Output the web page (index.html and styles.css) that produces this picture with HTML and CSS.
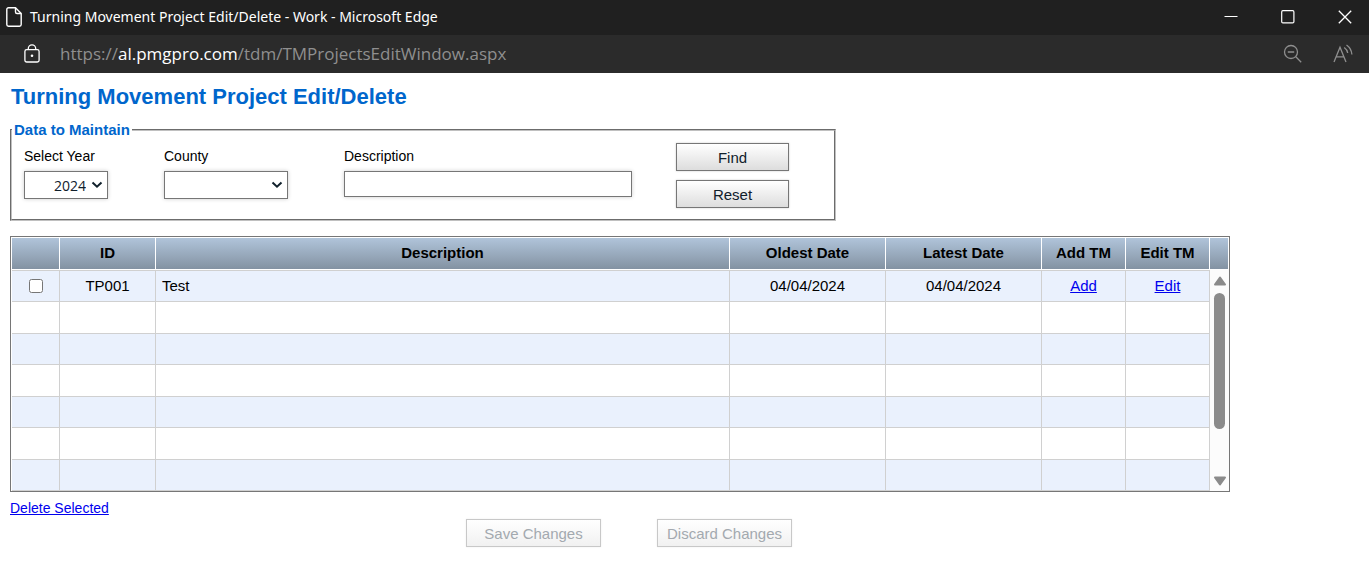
FILE: index.html
```html
<!DOCTYPE html>
<html lang="en">
  <head>
    <meta charset="UTF-8" />
    <meta name="viewport" content="width=device-width, initial-scale=1.0" />
    <title>Turning Movement Project Edit/Delete</title>
    <link rel="stylesheet" href="styles.css">
  </head>
  <body>
    <header class="window">
      <div class="title-bar">
        <svg class="page-icon" width="16" height="20" viewBox="0 0 16 20" fill="none" stroke="#fff" stroke-width="1.4" stroke-linejoin="round">
          <path d="M2.5 .8h7L15.2 6.5v11a1.7 1.7 0 0 1-1.7 1.7h-11A1.7 1.7 0 0 1 .8 17.5v-15A1.7 1.7 0 0 1 2.5 .8z" />
          <path d="M9.5 .8v4.2a1.5 1.5 0 0 0 1.5 1.5h4.2" />
        </svg>
        <span class="window-title">Turning Movement Project Edit/Delete - Work - Microsoft Edge</span>
        <div class="window-buttons">
          <button type="button" aria-label="Minimize">
            <svg width="14" height="14" viewBox="0 0 14 14" stroke="#fff"><path d="M.5 6.5h13" /></svg>
          </button>
          <button type="button" aria-label="Maximize">
            <svg width="14" height="14" viewBox="0 0 14 14" fill="none" stroke="#fff" stroke-width="1.2"><rect x=".7" y=".7" width="12.2" height="12.2" rx="1.2" /></svg>
          </button>
          <button type="button" aria-label="Close">
            <svg width="14" height="14" viewBox="0 0 14 14" stroke="#fff" stroke-width="1.3"><path d="M.8 .8l12.4 12.4M13.2 .8L.8 13.2" /></svg>
          </button>
        </div>
      </div>
      <div class="address-bar">
        <svg class="lock-icon" width="16" height="20" viewBox="0 0 16 20" fill="none" stroke="#fff" stroke-width="1.3">
          <rect x=".9" y="5.7" width="14.2" height="12.3" rx="1.8" />
          <path d="M4.3 5.7V4.5a3.7 3.7 0 0 1 7.4 0v1.2" />
          <circle cx="8" cy="11.8" r="1.3" fill="#fff" stroke="none" />
        </svg>
        <span class="url">https://<b>al.pmgpro.com</b>/tdm/TMProjectsEditWindow.aspx</span>
        <div class="address-tools">
          <button type="button" aria-label="Zoom out">
            <svg width="20" height="20" viewBox="0 0 20 20" fill="none" stroke="#8f8f8f" stroke-width="1.3">
              <circle cx="8" cy="8" r="6.5" />
              <path d="M4.8 8h6.4M12.8 12.8l5.4 5.4" />
            </svg>
          </button>
          <button type="button" aria-label="Read aloud">
            <svg width="20" height="20" viewBox="0 0 20 20" fill="none" stroke="#8f8f8f" stroke-width="1.3">
              <path d="M1 18L7 3.2 13 18M3.2 12.8h7.6" />
              <path d="M11.2 3.5q3 2 3.5 5.500M13.5 1q5 3.5 5.4 9.5" />
            </svg>
          </button>
        </div>
      </div>
    </header>

    <main class="page">
      <h1>Turning Movement Project Edit/Delete</h1>

      <form>
        <fieldset class="filters">
          <legend>Data to Maintain</legend>
          <div class="filter-row">
            <div class="field field-year">
              <label for="year">Select Year</label>
              <div class="select-box">
                <select id="year" class="year-select">
                  <option>2024</option>
                </select>
                <svg class="chevron" width="12" height="8" viewBox="0 0 12 8"><path d="M1.5 1.5L6 5.7l4.5-4.2" /></svg>
              </div>
            </div>
            <div class="field field-county">
              <label for="county">County</label>
              <div class="select-box">
                <select id="county">
                  <option></option>
                </select>
                <svg class="chevron" width="12" height="8" viewBox="0 0 12 8"><path d="M1.5 1.5L6 5.7l4.5-4.2" /></svg>
              </div>
            </div>
            <div class="field field-description">
              <label for="description">Description</label>
              <input type="text" id="description" />
            </div>
            <div class="filter-buttons">
              <button type="button" class="btn">Find</button>
              <button type="button" class="btn">Reset</button>
            </div>
          </div>
        </fieldset>
      </form>

      <div class="grid">
        <table>
          <colgroup>
            <col class="col-check" />
            <col class="col-id" />
            <col />
            <col class="col-date" />
            <col class="col-date" />
            <col class="col-link" />
            <col class="col-link" />
          </colgroup>
          <thead>
            <tr>
              <th></th>
              <th>ID</th>
              <th>Description</th>
              <th>Oldest Date</th>
              <th>Latest Date</th>
              <th>Add TM</th>
              <th>Edit TM</th>
            </tr>
          </thead>
          <tbody>
            <tr>
              <td><input type="checkbox" aria-label="Select TP001" /></td>
              <td>TP001</td>
              <td class="text">Test</td>
              <td>04/04/2024</td>
              <td>04/04/2024</td>
              <td><a href="#">Add</a></td>
              <td><a href="#">Edit</a></td>
            </tr>
            <tr><td></td><td></td><td></td><td></td><td></td><td></td><td></td></tr>
            <tr><td></td><td></td><td></td><td></td><td></td><td></td><td></td></tr>
            <tr><td></td><td></td><td></td><td></td><td></td><td></td><td></td></tr>
            <tr><td></td><td></td><td></td><td></td><td></td><td></td><td></td></tr>
            <tr><td></td><td></td><td></td><td></td><td></td><td></td><td></td></tr>
            <tr><td></td><td></td><td></td><td></td><td></td><td></td><td></td></tr>
          </tbody>
        </table>
        <div class="grid-side">
          <div class="side-head"></div>
          <div class="scrollbar">
            <svg width="14" height="10" viewBox="0 0 14 10"><path d="M7 1.5L12 8.5H2z" /></svg>
            <div class="thumb"></div>
            <svg width="14" height="10" viewBox="0 0 14 10"><path d="M7 8.5L12 1.5H2z" /></svg>
          </div>
        </div>
      </div>

      <a href="#" class="delete-link">Delete Selected</a>

      <div class="actions">
        <button type="button" class="btn" disabled>Save Changes</button>
        <button type="button" class="btn" disabled>Discard Changes</button>
      </div>
    </main>
  </body>
</html>
```
FILE: styles.css
```css
* {
  box-sizing: border-box;
}
body {
  margin: 0;
  background-color: #fff;
  color: #000;
  font-family: "Liberation Sans", Arial, sans-serif;
  font-size: 14px;
}
.window {
  font-family: "Noto Sans", "Segoe UI", sans-serif;
}
.window button {
  display: flex;
  padding: 0;
  border: none;
  background: none;
}
.title-bar {
  display: flex;
  align-items: center;
  height: 35px;
  padding: 0 17px 2px 6px;
  background-color: #202020;
  color: #fff;
}
.window-title {
  margin-left: 8px;
  font-size: 14px;
}
.window-buttons {
  display: flex;
  gap: 43px;
  margin-left: auto;
}
.address-bar {
  display: flex;
  align-items: center;
  height: 38px;
  padding: 0 16px 0 24px;
  background-color: #2b2b2b;
  color: #8f8f8f;
}
.url {
  margin-left: 20px;
  font-size: 17px;
  line-height: 22px;
}
.url b {
  color: #fff;
  font-weight: normal;
}
.address-tools {
  display: flex;
  gap: 30px;
  margin-left: auto;
}
.page {
  padding: 8px 10px;
}
h1 {
  margin: 0 0 8px 1px;
  color: #0066cc;
  font-size: 22px;
  line-height: 32px;
}
.filters {
  max-width: 826px;
  margin: 0;
  padding: 4px 0 11px;
  border: 2px groove #c0c0c0;
}
legend {
  padding: 0 2px;
  color: #0066cc;
  font-size: 15px;
  font-weight: bold;
  line-height: 18px;
}
.filter-row {
  display: flex;
  padding: 0 12px;
}
.field {
  display: flex;
  flex-direction: column;
  gap: 7px;
  padding-top: 5px;
}
.field label {
  line-height: 16px;
}
.field-year {
  width: 84px;
  margin-right: 56px;
}
.field-county {
  width: 124px;
  margin-right: 56px;
}
.field-description {
  flex: 0 1 288px;
  margin-right: 44px;
}
.field select,
.field input {
  width: 100%;
  height: 28px;
  padding: 0 21px 0 8px;
  border: 1px solid #767676;
  border-radius: 0;
  background-color: #fff;
  color: #10202c;
  font-family: "Open Sans", "Segoe UI", sans-serif;
  font-size: 14px;
  box-shadow: 0 0 4px #ccc;
  appearance: none;
}
.field input {
  height: 26px;
}
.field .year-select {
  text-align: right;
}
.select-box {
  position: relative;
}
.chevron {
  position: absolute;
  top: 10px;
  right: 5px;
  fill: none;
  stroke: #10202c;
  stroke-width: 2;
  pointer-events: none;
}
.filter-buttons {
  display: flex;
  flex-direction: column;
  gap: 9px;
  width: 113px;
}
.btn {
  height: 28px;
  padding: 1px 0 0;
  border: 1px solid #767676;
  background: linear-gradient(#fff, #ddd);
  color: #10202c;
  font-family: "Liberation Sans", Arial, sans-serif;
  font-size: 15px;
  box-shadow: 0 0 2px #ccc;
}
.grid {
  display: flex;
  max-width: 1220px;
  margin-top: 15px;
  padding-left: 1px;
  border: 1px solid #767676;
}
table {
  flex: 1;
  width: 100%;
  border-spacing: 0;
  table-layout: fixed;
  font-size: 15px;
}
.col-check {
  width: 48px;
}
.col-id {
  width: 96px;
}
.col-date {
  width: 156px;
}
.col-link {
  width: 84px;
}
th,
.side-head {
  height: 33px;
  padding: 0;
  border-top: 1px solid #fff;
  border-right: 1px solid #fff;
  border-bottom: 1px solid #fff;
  background: linear-gradient(#b0c4da, #8392a2);
}
th {
  padding-bottom: 2px;
}
td {
  height: 32px;
  padding: 0;
  border-right: 1px solid #d0d0d0;
  border-bottom: 1px solid #d0d0d0;
  text-align: center;
}
tbody tr:nth-child(odd) td {
  height: 31px;
  background-color: #eaf1fd;
}
tbody tr:first-child td {
  height: 32px;
  padding-bottom: 1px;
  border-top: 1px solid #d0d0d0;
}
td.text {
  padding-left: 6px;
  text-align: left;
}
td input {
  display: block;
  width: 14px;
  height: 14px;
  margin: 0 auto;
}
a {
  color: #0000ee;
}
.grid-side {
  display: flex;
  flex-direction: column;
  width: 19px;
}
.scrollbar {
  display: flex;
  flex: 1;
  flex-direction: column;
  align-items: center;
  padding: 6px 0 5px;
  background-color: #fcfcfc;
}
.scrollbar svg {
  fill: #8b8b8b;
  stroke: #8b8b8b;
  stroke-width: 2;
  stroke-linejoin: round;
}
.thumb {
  width: 11px;
  height: 136px;
  margin: 7px 0 auto;
  border-radius: 6px;
  background-color: #8b8b8b;
}
.delete-link {
  display: block;
  width: fit-content;
  margin-top: 8px;
  line-height: 16px;
}
.actions {
  display: flex;
  justify-content: center;
  gap: 56px;
  max-width: 1220px;
  margin-top: 3px;
  padding-left: 18px;
}
.actions .btn {
  width: 135px;
}
.btn:disabled {
  border-color: #c8c8c8;
  background: linear-gradient(#fff, #f1f1f1);
  color: #a3a9af;
  box-shadow: 0 0 2px #eee;
}
.url {
  font-family: "Open Sans", "Segoe UI", sans-serif;
}
```
